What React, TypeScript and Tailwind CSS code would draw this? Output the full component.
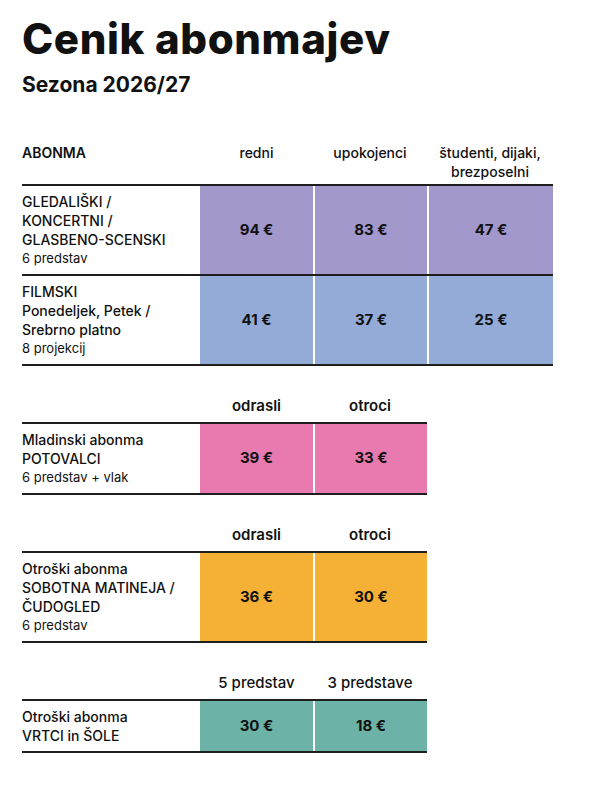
import React from 'react';

interface Row {
  lines: string[];
  note?: string;
  prices: string[];
}

interface Section {
  headers: string[];
  bg: string;
  rows: Row[];
}

const font = { fontFamily: 'Inter, "Noto Sans", sans-serif' };

const sections: Section[] = [
  {
    headers: ['redni', 'upokojenci', 'študenti, dijaki, brezposelni'],
    bg: 'bg-[#a398cb]',
    rows: [
      { lines: ['GLEDALIŠKI /', 'KONCERTNI /', 'GLASBENO-SCENSKI'], note: '6 predstav', prices: ['94 €', '83 €', '47 €'] },
      { lines: ['FILMSKI', 'Ponedeljek, Petek /', 'Srebrno platno'], note: '8 projekcij', prices: ['41 €', '37 €', '25 €'] },
    ],
  },
  {
    headers: ['odrasli', 'otroci'],
    bg: 'bg-[#e97aaf]',
    rows: [{ lines: ['Mladinski abonma', 'POTOVALCI'], note: '6 predstav + vlak', prices: ['39 €', '33 €'] }],
  },
  {
    headers: ['odrasli', 'otroci'],
    bg: 'bg-[#f5b136]',
    rows: [{ lines: ['Otroški abonma', 'SOBOTNA MATINEJA /', 'ČUDOGLED'], note: '6 predstav', prices: ['36 €', '30 €'] }],
  },
  {
    headers: ['5 predstav', '3 predstave'],
    bg: 'bg-[#6db2a6]',
    rows: [{ lines: ['Otroški abonma', 'VRTCI in ŠOLE'], prices: ['30 €', '18 €'] }],
  },
];

const cellWidths = ['w-[113px]', 'w-[114px]', 'w-[126px]'];

const PriceTable = ({ section, index }: { section: Section; index: number }) => {
  // first table has two differently coloured rows
  const rowBg = index === 0 ? ['bg-[#a398cb]', 'bg-[#93abd6]'] : [section.bg];
  return (
    <div className={index === 0 ? 'mt-[48px] w-[531px]' : 'mt-[30px] w-[405px]'}>
      <div className={`flex items-start ${index === 0 ? 'pb-[3px]' : 'pb-[7px]'}`}>
        <div className="w-[178px] shrink-0 text-[14px] leading-[19px] font-semibold">
          {index === 0 ? 'ABONMA' : ''}
        </div>
        {section.headers.map((h, i) => (
          <div
            key={h}
            className={`${cellWidths[i]} shrink-0 text-center leading-[19px] ${
              index === 0 ? 'text-[14px] font-medium px-1' : index === 3 ? 'text-[15px] font-medium' : 'text-[15px] font-semibold'
            }`}
          >
            {h}
          </div>
        ))}
      </div>
      {section.rows.map((row, r) => (
        <div key={r} className="flex border-t-2 border-[#1e1e1e] last:border-b-2">
          <div className="w-[178px] shrink-0 py-[6px] flex flex-col justify-center">
            {row.lines.map(l => (
              <div key={l} className="text-[14px] leading-[19px] font-medium">
                {l}
              </div>
            ))}
            {row.note && <div className="text-[13px] leading-[19px] font-normal">{row.note}</div>}
          </div>
          {row.prices.map((p, i) => (
            <div
              key={i}
              className={`${cellWidths[i]} shrink-0 ${rowBg[r]} ${i > 0 ? 'border-l-2 border-white' : ''} flex items-center justify-center text-[15px] font-bold`}
            >
              {p}
            </div>
          ))}
        </div>
      ))}
    </div>
  );
};

export default function App() {
  return (
    <div className="w-[600px] h-[788px] bg-white text-[#111] px-[22px] pt-[18px] overflow-hidden" style={font}>
      <h1 className="text-[42px] leading-none font-extrabold tracking-[0.015em]">Cenik abonmajev</h1>
      <h2 className="mt-[14px] text-[21px] leading-none font-bold">Sezona 2026/27</h2>
      {sections.map((s, i) => (
        <PriceTable key={i} section={s} index={i} />
      ))}
    </div>
  );
}
